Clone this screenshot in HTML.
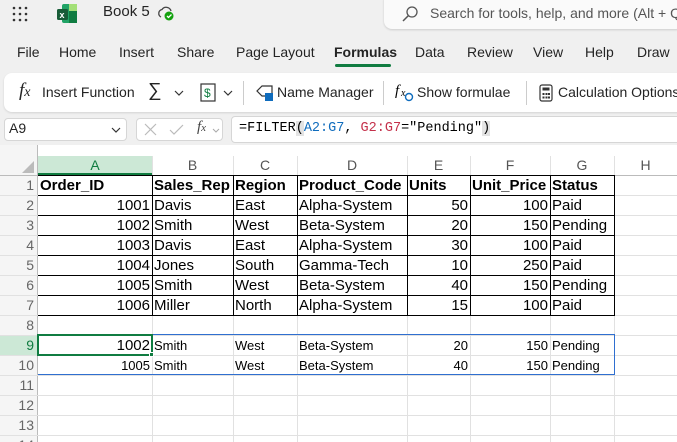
<!DOCTYPE html>
<html style="width:677px;height:442px;overflow:hidden"><head><meta charset="utf-8"><style>
*{margin:0;padding:0;box-sizing:border-box}
body{width:677px;height:442px;overflow:hidden;background:#f0f0f0;font-family:"Segoe UI","Liberation Sans",sans-serif;position:relative;color:#242424}
.a{position:absolute;white-space:nowrap}
.tab{position:absolute;top:44px;font-size:14px;color:#242424;white-space:nowrap}
.rb{font-size:14px;top:84px;position:absolute;white-space:nowrap}
.grid{position:absolute;left:0;top:145px;width:677px;height:297px;background:#fff}
.cell{position:absolute;height:20px;line-height:21px;font-family:"Liberation Sans",Arial,sans-serif;font-size:15px;color:#000;padding:0 2px;overflow:hidden;white-space:nowrap}
.r{text-align:right}
.sm{font-family:"Liberation Sans",sans-serif;font-size:13px}
.hl{position:absolute;background:#e1e1e1}
.rh{position:absolute;left:0;width:38px;text-align:right;padding-right:4px;font-family:"Liberation Sans",sans-serif;font-size:14px;color:#666;height:20px;line-height:21px}
.ch{position:absolute;top:156px;height:19px;line-height:19px;text-align:center;font-family:"Liberation Sans",sans-serif;font-size:14px;color:#555}
</style></head><body>
<svg class="a" style="left:11px;top:6px" width="18" height="16"><g fill="#333"><circle cx="3" cy="2" r="1.3"/><circle cx="9" cy="2" r="1.3"/><circle cx="15" cy="2" r="1.3"/><circle cx="3" cy="8" r="1.3"/><circle cx="9" cy="8" r="1.3"/><circle cx="15" cy="8" r="1.3"/><circle cx="3" cy="14" r="1.3"/><circle cx="9" cy="14" r="1.3"/><circle cx="15" cy="14" r="1.3"/></g></svg>
<svg class="a" style="left:57px;top:4px" width="20" height="19"><rect x="5" y="0" width="15" height="19" rx="2" fill="#21a366"/><rect x="12" y="0" width="8" height="7" fill="#a4e078"/><rect x="12" y="7" width="8" height="12" fill="#107c41"/><rect x="0" y="5" width="11" height="11" rx="1.5" fill="#185c37"/><text x="2.5" y="14" font-size="9" fill="#fff" font-family="Liberation Sans" font-weight="bold">x</text></svg>
<div class="a" style="left:103px;top:3px;font-size:15px">Book 5</div>
<svg class="a" style="left:157px;top:5px" width="18" height="16"><path d="M4 12a4 4 0 0 1 1-7.5 5 5 0 0 1 9 1.5" fill="none" stroke="#444" stroke-width="1.3"/><circle cx="12" cy="11" r="4.5" fill="#13a10e"/><path d="M10 11l1.5 1.5 3-3" stroke="#fff" fill="none" stroke-width="1.3"/></svg>
<div class="a" style="left:384px;top:-8px;width:300px;height:37px;background:#fafafa;border-radius:8px;box-shadow:0 1px 2px rgba(0,0,0,.15)"></div>
<svg class="a" style="left:402px;top:6px" width="16" height="16"><circle cx="10" cy="6" r="5" fill="none" stroke="#555" stroke-width="1.3"/><path d="M6.5 9.5L1 15" stroke="#555" stroke-width="1.5"/></svg>
<div class="a" style="left:430px;top:5px;font-size:14px;color:#555">Search for tools, help, and more (Alt + Q)</div>
<div class="tab" style="left:17px">File</div>
<div class="tab" style="left:59px">Home</div>
<div class="tab" style="left:119px">Insert</div>
<div class="tab" style="left:177px">Share</div>
<div class="tab" style="left:236px">Page Layout</div>
<div class="tab" style="left:334px;font-weight:bold">Formulas</div>
<div class="a" style="left:335px;top:64px;width:56px;height:3px;background:#107c41;border-radius:2px"></div>
<div class="tab" style="left:415px">Data</div>
<div class="tab" style="left:467px">Review</div>
<div class="tab" style="left:533px">View</div>
<div class="tab" style="left:585px">Help</div>
<div class="tab" style="left:637px">Draw</div>
<div class="a" style="left:4px;top:73px;width:690px;height:39px;background:#fff;border-radius:8px;box-shadow:0 1px 2px rgba(0,0,0,.12)"></div>
<div class="rb" style="left:19px;top:80px;font-family:'Liberation Serif',serif;font-style:italic;font-size:19px">f<span style="font-size:14px">x</span></div>
<div class="rb" style="left:42px">Insert Function</div>
<div class="rb" style="left:148px;font-size:19px;top:80px">∑</div>
<svg class="a" style="left:174px;top:90px" width="10" height="6"><path d="M1 1l4 4 4-4" fill="none" stroke="#333" stroke-width="1.2"/></svg>
<svg class="a" style="left:200px;top:83px" width="16" height="20"><rect x="1" y="1" width="14" height="17" fill="none" stroke="#333" stroke-width="1.2"/><text x="4" y="14" font-size="12" fill="#107c41" font-family="Liberation Sans">$</text></svg>
<svg class="a" style="left:223px;top:90px" width="10" height="6"><path d="M1 1l4 4 4-4" fill="none" stroke="#333" stroke-width="1.2"/></svg>
<div class="a" style="left:243px;top:81px;width:1px;height:24px;background:#ccc"></div>
<svg class="a" style="left:255px;top:84px" width="20" height="18"><path d="M7 2h10v10H7L2 7z" fill="none" stroke="#333" stroke-width="1.2"/><rect x="10" y="9" width="8" height="8" fill="#0f6cbd"/></svg>
<div class="rb" style="left:277px">Name Manager</div>
<div class="a" style="left:383px;top:81px;width:1px;height:24px;background:#ccc"></div>
<svg class="a" style="left:395px;top:81px" width="20" height="22"><text x="0" y="14" font-size="15" font-style="italic" font-family="Liberation Serif">f</text><text x="6" y="15" font-size="10" font-style="italic" font-family="Liberation Serif">x</text><circle cx="14" cy="16" r="3.5" fill="none" stroke="#0f6cbd" stroke-width="1.4"/></svg>
<div class="rb" style="left:417px">Show formulae</div>
<div class="a" style="left:526px;top:81px;width:1px;height:24px;background:#ccc"></div>
<svg class="a" style="left:539px;top:84px" width="14" height="18"><rect x="1" y="1" width="12" height="16" rx="2" fill="none" stroke="#333" stroke-width="1.2"/><rect x="3.5" y="3.5" width="7" height="3" fill="#333"/><g fill="#333"><rect x="3.5" y="9" width="2" height="2"/><rect x="6.5" y="9" width="2" height="2"/><rect x="9" y="9" width="2" height="2"/><rect x="3.5" y="12.5" width="2" height="2"/><rect x="6.5" y="12.5" width="2" height="2"/><rect x="9" y="12.5" width="2" height="2"/></g></svg>
<div class="rb" style="left:558px">Calculation Options</div>
<div class="a" style="left:4px;top:118px;width:123px;height:23px;background:#fff;border:1px solid #d6d6d6;border-radius:4px"></div>
<div class="a" style="left:9px;top:120px;font-size:14px;font-family:'Liberation Sans',sans-serif">A9</div>
<svg class="a" style="left:111px;top:127px" width="10" height="6"><path d="M1 1l4 4 4-4" fill="none" stroke="#333" stroke-width="1.2"/></svg>
<div class="a" style="left:136px;top:118px;width:87px;height:23px;background:#fff;border:1px solid #d6d6d6;border-radius:4px"></div>
<svg class="a" style="left:143px;top:122px" width="46" height="15"><path d="M2 2l11 11M13 2L2 13" stroke="#bbb" stroke-width="1.2"/><path d="M27 8l4 4 9-9" stroke="#bbb" stroke-width="1.2" fill="none"/></svg>
<div class="a" style="left:197px;top:119px;font-family:'Liberation Serif',serif;font-style:italic;font-size:15px;color:#444">f<span style="font-size:11px">x</span></div>
<svg class="a" style="left:212px;top:128px" width="8" height="5"><path d="M1 1l3 3 3-3" fill="none" stroke="#aaa"/></svg>
<div class="a" style="left:231px;top:116px;width:460px;height:27px;background:#fff;border:1px solid #d6d6d6;border-radius:4px 0 0 4px"></div>
<div class="a" style="left:239px;top:121px;font-family:'Liberation Mono',monospace;font-size:13.5px;color:#000">=FILTER<span style="background:#e3e3e3">(</span><span style="color:#0f6cbd">A2:G7</span>, <span style="color:#c4314b">G2:G7</span>="Pending"<span style="background:#e3e3e3">)</span></div>
<div class="grid"></div>
<div class="a" style="left:0;top:145px;width:38px;height:297px;background:#f5f5f5"></div>
<div class="a" style="left:37px;top:145px;width:1px;height:297px;background:#bbb"></div>
<div class="a" style="left:38px;top:156px;width:114px;height:19px;background:#cce8d6"></div>
<div class="a" style="left:38px;top:173px;width:114px;height:2px;background:#107c41"></div>
<div class="a" style="left:0;top:175px;width:677px;height:1px;background:#bbb"></div>
<svg class="a" style="left:22px;top:161px" width="12" height="12"><path d="M12 0V12H0z" fill="#bbb"/></svg>
<div class="a" style="left:0;top:335px;width:38px;height:20px;background:#cce8d6"></div>
<div class="a" style="left:37px;top:335px;width:2px;height:20px;background:#107c41"></div>
<div class="hl" style="left:152px;top:156px;width:1px;height:286px"></div>
<div class="hl" style="left:233px;top:156px;width:1px;height:286px"></div>
<div class="hl" style="left:297px;top:156px;width:1px;height:286px"></div>
<div class="hl" style="left:407px;top:156px;width:1px;height:286px"></div>
<div class="hl" style="left:470px;top:156px;width:1px;height:286px"></div>
<div class="hl" style="left:550px;top:156px;width:1px;height:286px"></div>
<div class="hl" style="left:614px;top:156px;width:1px;height:286px"></div>
<div class="hl" style="left:0;top:195px;width:677px;height:1px"></div>
<div class="hl" style="left:0;top:215px;width:677px;height:1px"></div>
<div class="hl" style="left:0;top:235px;width:677px;height:1px"></div>
<div class="hl" style="left:0;top:255px;width:677px;height:1px"></div>
<div class="hl" style="left:0;top:275px;width:677px;height:1px"></div>
<div class="hl" style="left:0;top:295px;width:677px;height:1px"></div>
<div class="hl" style="left:0;top:315px;width:677px;height:1px"></div>
<div class="hl" style="left:0;top:335px;width:677px;height:1px"></div>
<div class="hl" style="left:0;top:355px;width:677px;height:1px"></div>
<div class="hl" style="left:0;top:375px;width:677px;height:1px"></div>
<div class="hl" style="left:0;top:395px;width:677px;height:1px"></div>
<div class="hl" style="left:0;top:415px;width:677px;height:1px"></div>
<div class="hl" style="left:0;top:435px;width:677px;height:1px"></div>
<div class="a" style="left:38px;top:175px;width:577px;height:141px;border:1px solid #000;border-left:none"></div>
<div class="a" style="left:38px;top:195px;width:577px;height:1px;background:#000"></div>
<div class="a" style="left:38px;top:215px;width:577px;height:1px;background:#000"></div>
<div class="a" style="left:38px;top:235px;width:577px;height:1px;background:#000"></div>
<div class="a" style="left:38px;top:255px;width:577px;height:1px;background:#000"></div>
<div class="a" style="left:38px;top:275px;width:577px;height:1px;background:#000"></div>
<div class="a" style="left:38px;top:295px;width:577px;height:1px;background:#000"></div>
<div class="a" style="left:152px;top:175px;width:1px;height:140px;background:#000"></div>
<div class="a" style="left:233px;top:175px;width:1px;height:140px;background:#000"></div>
<div class="a" style="left:297px;top:175px;width:1px;height:140px;background:#000"></div>
<div class="a" style="left:407px;top:175px;width:1px;height:140px;background:#000"></div>
<div class="a" style="left:470px;top:175px;width:1px;height:140px;background:#000"></div>
<div class="a" style="left:550px;top:175px;width:1px;height:140px;background:#000"></div>
<div class="a" style="left:38px;top:334px;width:577px;height:41px;border:1px solid #2f6fd0;border-left:none"></div>
<div class="a" style="left:37px;top:334px;width:116px;height:22px;border:2px solid #107c41"></div>
<div class="a" style="left:149px;top:352px;width:5px;height:5px;background:#107c41;border:1px solid #fff"></div>
<div class="ch" style="left:38px;width:114px;color:#107c41">A</div>
<div class="ch" style="left:152px;width:81px">B</div>
<div class="ch" style="left:233px;width:64px">C</div>
<div class="ch" style="left:297px;width:110px">D</div>
<div class="ch" style="left:407px;width:63px">E</div>
<div class="ch" style="left:470px;width:80px">F</div>
<div class="ch" style="left:550px;width:64px">G</div>
<div class="ch" style="left:614px;width:63px">H</div>
<div class="rh" style="top:175px">1</div><div class="rh" style="top:195px">2</div><div class="rh" style="top:215px">3</div><div class="rh" style="top:235px">4</div><div class="rh" style="top:255px">5</div><div class="rh" style="top:275px">6</div><div class="rh" style="top:295px">7</div><div class="rh" style="top:315px">8</div><div class="rh" style="top:335px;color:#107c41">9</div><div class="rh" style="top:355px">10</div><div class="rh" style="top:375px">11</div><div class="rh" style="top:395px">12</div><div class="rh" style="top:415px">13</div><div class="rh" style="top:435px">14</div>
<div class="cell" style="left:38px;top:175px;font-weight:bold">Order_ID</div>
<div class="cell" style="left:152px;top:175px;font-weight:bold">Sales_Rep</div>
<div class="cell" style="left:233px;top:175px;font-weight:bold">Region</div>
<div class="cell" style="left:297px;top:175px;font-weight:bold">Product_Code</div>
<div class="cell" style="left:407px;top:175px;font-weight:bold">Units</div>
<div class="cell" style="left:470px;top:175px;font-weight:bold">Unit_Price</div>
<div class="cell" style="left:550px;top:175px;font-weight:bold">Status</div>
<div class="cell r" style="left:38px;width:114px;top:195px">1001</div><div class="cell" style="left:152px;top:195px">Davis</div><div class="cell" style="left:233px;top:195px">East</div><div class="cell" style="left:297px;top:195px">Alpha-System</div><div class="cell r" style="left:407px;width:63px;top:195px">50</div><div class="cell r" style="left:470px;width:80px;top:195px">100</div><div class="cell" style="left:550px;top:195px">Paid</div>
<div class="cell r" style="left:38px;width:114px;top:215px">1002</div><div class="cell" style="left:152px;top:215px">Smith</div><div class="cell" style="left:233px;top:215px">West</div><div class="cell" style="left:297px;top:215px">Beta-System</div><div class="cell r" style="left:407px;width:63px;top:215px">20</div><div class="cell r" style="left:470px;width:80px;top:215px">150</div><div class="cell" style="left:550px;top:215px">Pending</div>
<div class="cell r" style="left:38px;width:114px;top:235px">1003</div><div class="cell" style="left:152px;top:235px">Davis</div><div class="cell" style="left:233px;top:235px">East</div><div class="cell" style="left:297px;top:235px">Alpha-System</div><div class="cell r" style="left:407px;width:63px;top:235px">30</div><div class="cell r" style="left:470px;width:80px;top:235px">100</div><div class="cell" style="left:550px;top:235px">Paid</div>
<div class="cell r" style="left:38px;width:114px;top:255px">1004</div><div class="cell" style="left:152px;top:255px">Jones</div><div class="cell" style="left:233px;top:255px">South</div><div class="cell" style="left:297px;top:255px">Gamma-Tech</div><div class="cell r" style="left:407px;width:63px;top:255px">10</div><div class="cell r" style="left:470px;width:80px;top:255px">250</div><div class="cell" style="left:550px;top:255px">Paid</div>
<div class="cell r" style="left:38px;width:114px;top:275px">1005</div><div class="cell" style="left:152px;top:275px">Smith</div><div class="cell" style="left:233px;top:275px">West</div><div class="cell" style="left:297px;top:275px">Beta-System</div><div class="cell r" style="left:407px;width:63px;top:275px">40</div><div class="cell r" style="left:470px;width:80px;top:275px">150</div><div class="cell" style="left:550px;top:275px">Pending</div>
<div class="cell r" style="left:38px;width:114px;top:295px">1006</div><div class="cell" style="left:152px;top:295px">Miller</div><div class="cell" style="left:233px;top:295px">North</div><div class="cell" style="left:297px;top:295px">Alpha-System</div><div class="cell r" style="left:407px;width:63px;top:295px">15</div><div class="cell r" style="left:470px;width:80px;top:295px">100</div><div class="cell" style="left:550px;top:295px">Paid</div>
<div class="cell r" style="left:38px;width:114px;top:335px">1002</div><div class="cell sm" style="left:152px;top:335px">Smith</div><div class="cell sm" style="left:233px;top:335px">West</div><div class="cell sm" style="left:297px;top:335px">Beta-System</div><div class="cell r sm" style="left:407px;width:63px;top:335px">20</div><div class="cell r sm" style="left:470px;width:80px;top:335px">150</div><div class="cell sm" style="left:550px;top:335px">Pending</div>
<div class="cell r sm" style="left:38px;width:114px;top:355px">1005</div><div class="cell sm" style="left:152px;top:355px">Smith</div><div class="cell sm" style="left:233px;top:355px">West</div><div class="cell sm" style="left:297px;top:355px">Beta-System</div><div class="cell r sm" style="left:407px;width:63px;top:355px">40</div><div class="cell r sm" style="left:470px;width:80px;top:355px">150</div><div class="cell sm" style="left:550px;top:355px">Pending</div>
</body></html>
